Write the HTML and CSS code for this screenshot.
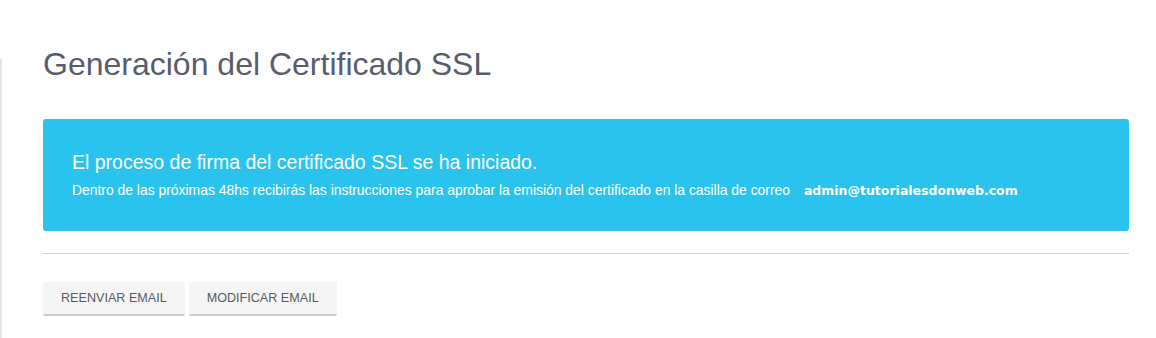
FILE: index.html
```html
<!DOCTYPE html>
<html lang="es">
<head>
<meta charset="utf-8">
<link rel="stylesheet" href="styles.css">
</head>
<body>
<div class="page">
  <div class="content">
    <h1 class="title">Generación del Certificado SSL</h1>
    <div class="alert">
      <h2 class="alert-title">El proceso de firma del certificado SSL se ha iniciado.</h2>
      <p class="alert-text">Dentro de las próximas 48hs recibirás las instrucciones para aprobar la emisión del certificado en la casilla de correo <strong class="email">admin@tutorialesdonweb.com</strong></p>
    </div>
    <hr class="divider">
    <div class="actions">
      <button class="btn">REENVIAR EMAIL</button>
      <button class="btn">MODIFICAR EMAIL</button>
    </div>
  </div>
</div>
</body>
</html>
```
FILE: styles.css
```css
html, body {
  margin: 0;
  padding: 0;
  background: #fff;
}
body {
  font-family: "Liberation Sans", Arial, sans-serif;
}
.page {
  padding-top: 59px;
}
.content {
  display: flow-root;
  border-left: 2px solid #e2e2e2;
  padding: 0 27px 0 41px;
  min-height: 279px;
  box-sizing: border-box;
}
.title {
  margin: -15px 0 0 0;
  font-weight: normal;
  font-size: 32px;
  line-height: 40px;
  color: #585c6c;
}
.alert {
  margin-top: 35px;
  background: #29c3ee;
  border-radius: 3px;
  padding: 30px 29px 0 29px;
  height: 82px;
  color: #fff;
}
.alert-title {
  margin: 0;
  font-weight: normal;
  font-size: 19.5px;
  line-height: 26px;
}
.alert-text {
  margin: 6px 0 0 0;
  font-size: 13.9px;
  line-height: 18px;
}
.email {
  font-family: "DejaVu Sans", sans-serif;
  font-weight: bold;
  font-size: 12.5px;
  margin-left: 10px;
}
.divider {
  margin: 22px 0 0 0;
  border: 0;
  border-top: 1px solid #cfcfcf;
  height: 0;
}
.actions {
  margin-top: 28px;
  display: flex;
  gap: 4px;
}
.btn {
  font-family: "Liberation Sans", Arial, sans-serif;
  font-size: 12.6px;
  color: #555a66;
  background: #f5f5f5;
  border: 0;
  border-bottom: 2px solid #cdcdcd;
  border-radius: 2px;
  height: 34px;
  padding: 0 18px;
}
```
